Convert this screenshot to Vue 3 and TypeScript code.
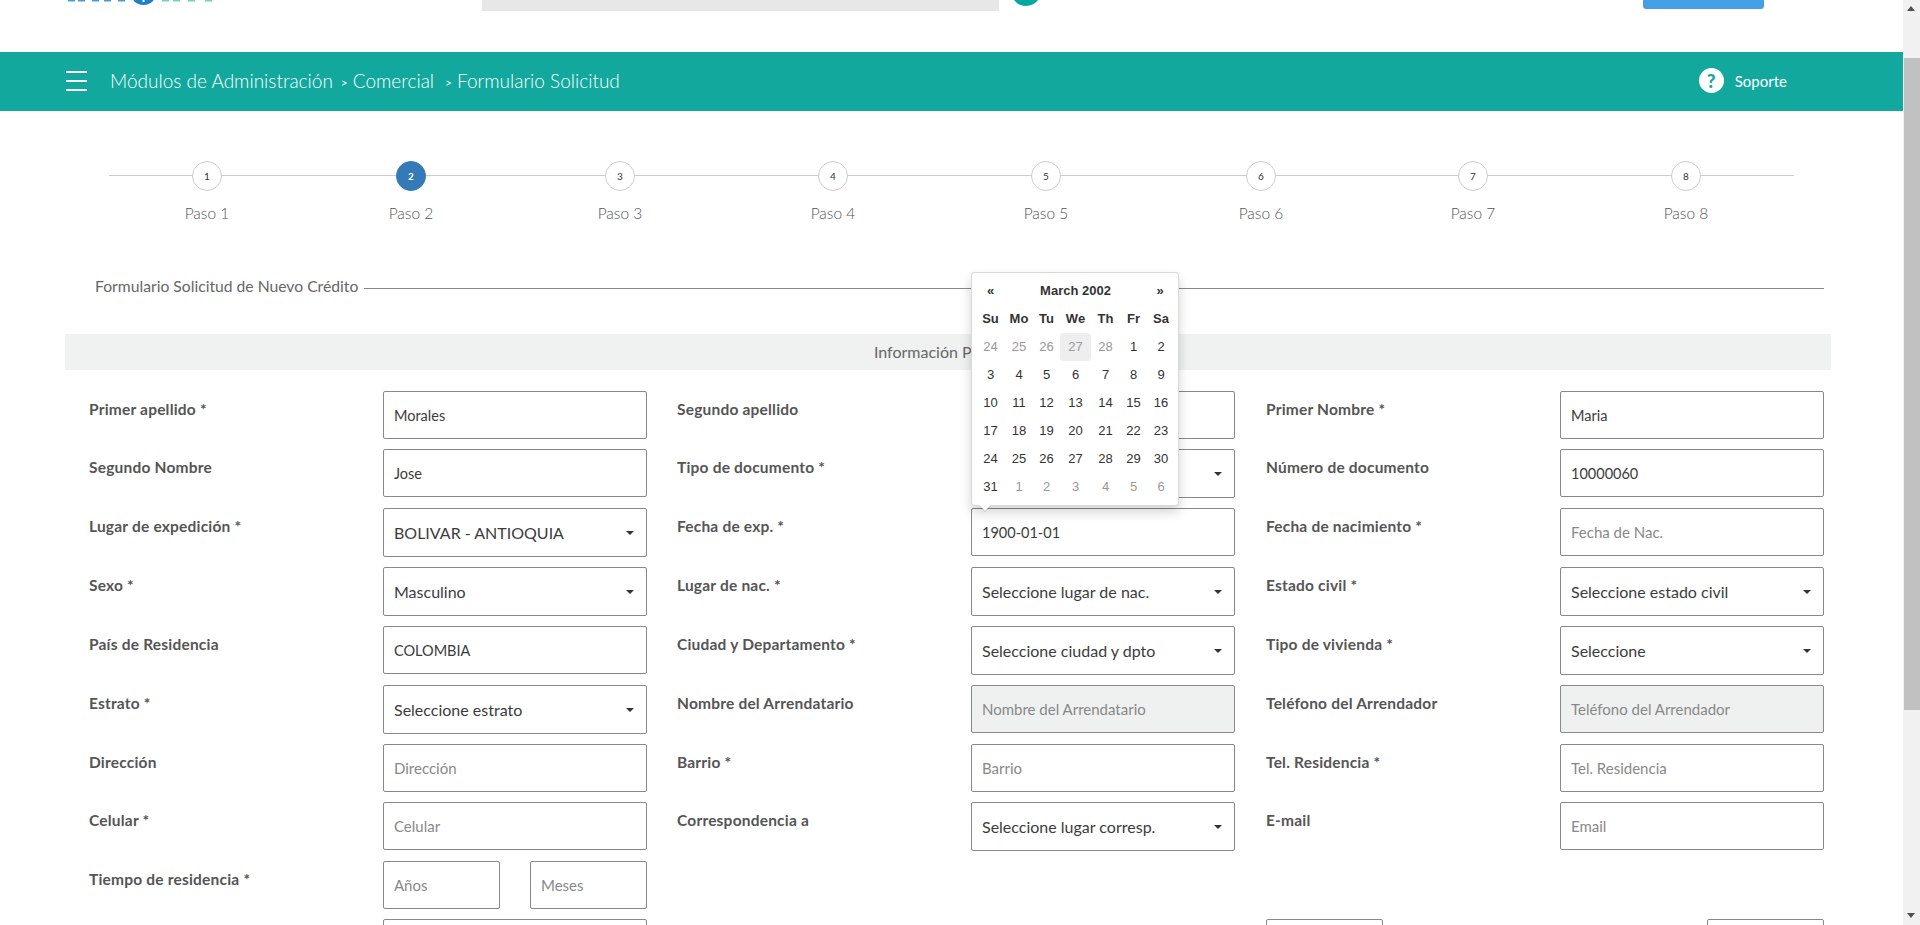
<script setup lang="ts">
type Field = {
  label: string
  type?: 'input' | 'select' | 'pair'
  value?: string
  placeholder?: string
  disabled?: boolean
}

const stepWidths = [196, 212, 206, 220, 206, 224, 200, 226]
const logoBlue = [68, 78, 92, 104, 118]
const logoTeal = [162, 173, 188, 205]

const fields: Field[] = [
  { label: 'Primer apellido *', value: 'Morales' },
  { label: 'Segundo apellido' },
  { label: 'Primer Nombre *', value: 'Maria' },
  { label: 'Segundo Nombre', value: 'Jose' },
  { label: 'Tipo de documento *', type: 'select', value: 'Cédula' },
  { label: 'Número de documento', value: '10000060' },
  { label: 'Lugar de expedición *', type: 'select', value: 'BOLIVAR - ANTIOQUIA' },
  { label: 'Fecha de exp. *', value: '1900-01-01' },
  { label: 'Fecha de nacimiento *', placeholder: 'Fecha de Nac.' },
  { label: 'Sexo *', type: 'select', value: 'Masculino' },
  { label: 'Lugar de nac. *', type: 'select', value: 'Seleccione lugar de nac.' },
  { label: 'Estado civil *', type: 'select', value: 'Seleccione estado civil' },
  { label: 'País de Residencia', value: 'COLOMBIA' },
  { label: 'Ciudad y Departamento *', type: 'select', value: 'Seleccione ciudad y dpto' },
  { label: 'Tipo de vivienda *', type: 'select', value: 'Seleccione' },
  { label: 'Estrato *', type: 'select', value: 'Seleccione estrato' },
  { label: 'Nombre del Arrendatario', placeholder: 'Nombre del Arrendatario', disabled: true },
  { label: 'Teléfono del Arrendador', placeholder: 'Teléfono del Arrendador', disabled: true },
  { label: 'Dirección', placeholder: 'Dirección' },
  { label: 'Barrio *', placeholder: 'Barrio' },
  { label: 'Tel. Residencia *', placeholder: 'Tel. Residencia' },
  { label: 'Celular *', placeholder: 'Celular' },
  { label: 'Correspondencia a', type: 'select', value: 'Seleccione lugar corresp.' },
  { label: 'E-mail', placeholder: 'Email' },
]

const weekDays = ['Su', 'Mo', 'Tu', 'We', 'Th', 'Fr', 'Sa']
const days = [
  24, 25, 26, 27, 28, 1, 2,
  3, 4, 5, 6, 7, 8, 9,
  10, 11, 12, 13, 14, 15, 16,
  17, 18, 19, 20, 21, 22, 23,
  24, 25, 26, 27, 28, 29, 30,
  31, 1, 2, 3, 4, 5, 6,
]

const isMuted = (index: number) => index < 5 || index > 35
</script>

<template>
  <div class="page">
    <main class="content">
      <header class="top">
        <svg class="logo" width="160" height="6" viewBox="60 0 160 6">
          <rect v-for="x in logoBlue" :key="x" :x="x" y="0" width="7" height="1.5" fill="#4a9bd4" />
          <circle cx="143.5" cy="-8" r="13" fill="#1f7fc4" />
          <rect x="142.5" y="0" width="2" height="2" fill="#fff" />
          <rect v-for="x in logoTeal" :key="x" :x="x" y="0" width="7" height="1.5" fill="#6fd3c8" />
        </svg>
        <div class="search"></div>
        <div class="round"></div>
        <div class="btn"></div>
      </header>

      <nav class="bar">
        <div class="burger"><span></span><span></span><span></span></div>
        <span class="crumb">Módulos de Administración</span>
        <span class="sep">&gt;</span>
        <span class="crumb">Comercial</span>
        <span class="sep wide">&gt;</span>
        <span class="crumb">Formulario Solicitud</span>
        <div class="help">
          <span class="help-icon">?</span>
          <span class="help-text">Soporte</span>
        </div>
      </nav>

      <section class="steps">
        <div
          v-for="(w, i) in stepWidths"
          :key="i"
          class="step"
          :class="{ active: i === 1 }"
          :style="{ width: w + 'px' }"
        >
          <span class="dot">{{ i + 1 }}</span>
          <span class="step-name">Paso {{ i + 1 }}</span>
        </div>
      </section>

      <div class="legend">
        <span>Formulario Solicitud de Nuevo Crédito</span>
        <i></i>
      </div>

      <div class="band">Información Personal</div>

      <form class="form">
        <div v-for="f in fields" :key="f.label" class="field">
          <label>{{ f.label }}</label>
          <div v-if="f.type === 'select'" class="select-wrap">
            <select>
              <option>{{ f.value }}</option>
            </select>
          </div>
          <input v-else :value="f.value" :placeholder="f.placeholder" :disabled="f.disabled" />
        </div>

        <div class="field">
          <label>Tiempo de residencia *</label>
          <div class="pair">
            <input placeholder="Años" />
            <input placeholder="Meses" />
          </div>
        </div>
        <div class="field"></div>
        <div class="field"></div>

        <div class="field">
          <span></span>
          <input />
        </div>
        <div class="field"></div>
        <div class="field">
          <input class="short" />
          <div class="end"><input class="short" /></div>
        </div>
      </form>

      <div class="picker">
        <div class="picker-head">
          <b>«</b>
          <b class="month">March 2002</b>
          <b>»</b>
        </div>
        <div class="picker-grid">
          <b v-for="d in weekDays" :key="d">{{ d }}</b>
          <span
            v-for="(d, i) in days"
            :key="i"
            :class="{ muted: isMuted(i), today: i === 3 }"
          >{{ d }}</span>
        </div>
      </div>
    </main>

    <aside class="scroll">
      <i class="arrow up"></i>
      <div class="thumb"></div>
      <i class="arrow down"></i>
    </aside>
  </div>
</template>

<style scoped>
.page {
  display: flex;
  height: 925px;
  overflow: hidden;
  font-family: Lato, "Open Sans", sans-serif;
  color: #666;
  background: #fff;
}

.content {
  position: relative;
  width: 1903px;
  flex: none;
}

.top {
  position: relative;
  height: 52px;
  display: flex;
  align-items: flex-start;
}

.logo {
  position: absolute;
  left: 60px;
  top: 0;
}

.search {
  margin-left: 482px;
  width: 517px;
  height: 11px;
  background: #e6e7e8;
}

.round {
  margin: -24px 0 0 12px;
  width: 30px;
  height: 30px;
  border-radius: 50%;
  background: #00a99d;
}

.btn {
  margin-left: 602px;
  width: 121px;
  height: 9px;
  background: #46a0e8;
  border-radius: 0 0 3px 3px;
}

.bar {
  box-sizing: border-box;
  height: 59px;
  display: flex;
  align-items: center;
  padding: 0 0 2px 66px;
  background: #12a89d;
  color: #fff;
}

.burger {
  width: 21px;
  margin-right: 23px;
  display: flex;
  flex-direction: column;
  gap: 7px;
}

.burger span {
  height: 2px;
  background: #fff;
}

.crumb {
  font-size: 19px;
  font-weight: 300;
}

.sep {
  margin: 3px 5px 0 8px;
  font-size: 12px;
}

.sep.wide {
  margin-left: 11px;
}

.help {
  margin-left: auto;
  margin-right: 116px;
  display: flex;
  align-items: center;
  gap: 11px;
}

.help-icon {
  width: 25px;
  height: 25px;
  border-radius: 50%;
  background: #fff;
  color: #12a89d;
  font-size: 19px;
  font-weight: 900;
  line-height: 25px;
  text-align: center;
}

.help-text {
  font-size: 15px;
}

.steps {
  position: relative;
  display: flex;
  margin: 50px 0 0 109px;
  height: 71px;
}

.steps::before {
  content: "";
  position: absolute;
  left: 0;
  top: 14px;
  width: 1685px;
  height: 1px;
  background: #ccc;
}

.step {
  position: relative;
  display: flex;
  flex-direction: column;
  align-items: center;
  flex: none;
}

.dot {
  box-sizing: border-box;
  width: 30px;
  height: 30px;
  border: 1px solid #ccc;
  border-radius: 50%;
  background: #fff;
  color: #333;
  font-size: 10px;
  line-height: 29px;
  text-align: center;
}

.step.active .dot {
  border-color: #337ab7;
  background: #337ab7;
  color: #fff;
  font-weight: 700;
}

.step-name {
  margin-top: 13px;
  font-size: 15.5px;
  font-weight: 300;
  color: #555;
}

.legend {
  display: flex;
  align-items: center;
  gap: 6px;
  margin: 39px 79px 0 95px;
  height: 30px;
  font-size: 15.7px;
}

.legend i {
  flex: 1;
  height: 1px;
  margin-top: 4px;
  background: #888;
}

.band {
  margin: 33px 0 0 65px;
  width: 1766px;
  height: 36px;
  background: #f0f1f1;
  font-size: 16px;
  line-height: 36px;
  text-align: center;
}

.form {
  display: grid;
  grid-template-columns: 558px 559px 558px;
  column-gap: 30px;
  row-gap: 10px;
  align-items: start;
  margin: 21px 0 0 89px;
}

.field {
  display: grid;
  grid-template-columns: 294px 264px;
}

label {
  padding-top: 8px;
  font-size: 15.5px;
  letter-spacing: 0.2px;
  line-height: 20px;
  font-weight: 700;
  color: #555;
}

input,
select {
  box-sizing: border-box;
  width: 100%;
  border: 1px solid #888;
  border-radius: 2px;
  background: #fff;
  color: #3c3c3c;
  font-family: inherit;
  outline: none;
}

input {
  display: block;
  height: 48px;
  padding: 0 10px;
  font-size: 14.5px;
}

input::placeholder {
  color: #888;
  opacity: 1;
  font-size: 15px;
}

input:disabled {
  background: #eff1f1;
}

.select-wrap {
  position: relative;
}

.select-wrap::after {
  content: "";
  position: absolute;
  right: 13px;
  top: 23px;
  border-top: 4px solid #333;
  border-left: 4px solid transparent;
  border-right: 4px solid transparent;
}

select {
  display: block;
  height: 49px;
  padding: 0 10px;
  appearance: none;
  font-size: 16px;
}

.pair {
  display: flex;
  justify-content: space-between;
}

.short,
.pair input {
  width: 117px;
}

.end {
  display: flex;
  justify-content: flex-end;
  padding-left: 0;
}

.picker {
  box-sizing: border-box;
  position: absolute;
  left: 971px;
  top: 272px;
  width: 208px;
  height: 234px;
  padding: 4px;
  border: 1px solid rgba(0, 0, 0, 0.15);
  border-radius: 4px;
  background: #fff;
  box-shadow: 0 6px 12px rgba(0, 0, 0, 0.175);
  font-family: "Liberation Sans", Arial, sans-serif;
  font-size: 13px;
  color: #333;
}

.picker::before,
.picker::after {
  content: "";
  position: absolute;
  left: 7px;
  border-left: 6px solid transparent;
  border-right: 6px solid transparent;
}

.picker::before {
  bottom: -7px;
  border-top: 6px solid rgba(0, 0, 0, 0.15);
}

.picker::after {
  bottom: -6px;
  border-top: 6px solid #fff;
}

.picker-head {
  display: grid;
  grid-template-columns: 29px 1fr 28px;
  height: 28px;
  line-height: 28px;
  text-align: center;
}

.picker-grid {
  display: grid;
  grid-template-columns: 29px 28px 27px 31px 29px 27px 28px;
  grid-auto-rows: 28px;
  line-height: 28px;
  text-align: center;
}

.muted {
  color: #999;
}

.today {
  background: #eee;
  border-radius: 4px;
}

.scroll {
  width: 17px;
  flex: none;
  height: 925px;
  position: relative;
  background: #f1f1f1;
}

.thumb {
  position: absolute;
  left: 1px;
  right: 0;
  top: 58px;
  height: 652px;
  background: #c1c1c1;
}

.arrow {
  position: absolute;
  left: 4px;
  border-left: 4px solid transparent;
  border-right: 4px solid transparent;
}

.arrow.up {
  top: 6px;
  border-bottom: 5px solid #505050;
}

.arrow.down {
  bottom: 7px;
  border-top: 5px solid #505050;
}
</style>

<style>
body {
  margin: 0;
  overflow: hidden;
}
</style>
